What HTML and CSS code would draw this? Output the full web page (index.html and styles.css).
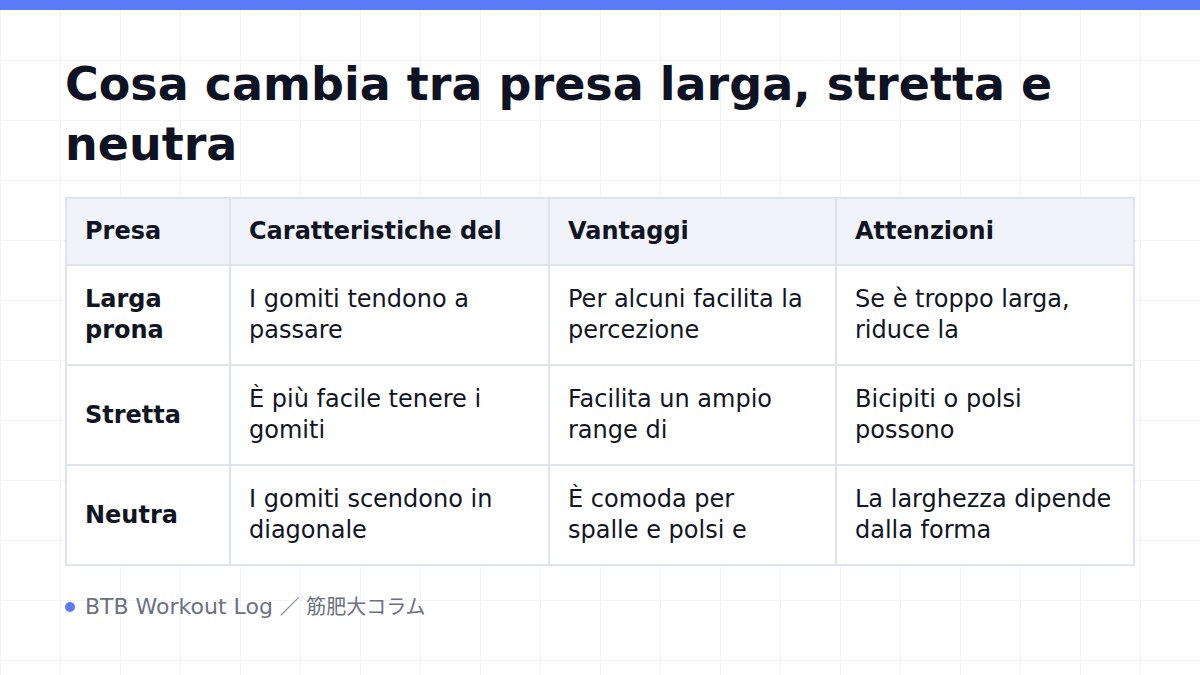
FILE: index.html
```html
<!DOCTYPE html>
<html lang="it">
<head>
<meta charset="utf-8">
<link rel="stylesheet" href="styles.css">
</head>
<body>
<div class="topbar"></div>
<main class="slide">
  <h1 class="title">Cosa cambia tra presa larga, stretta e neutra</h1>
  <table class="grip">
    <colgroup>
      <col class="c1"><col class="c2"><col class="c3"><col class="c4">
    </colgroup>
    <thead>
      <tr><th>Presa</th><th>Caratteristiche del</th><th class="k3">Vantaggi</th><th class="k4">Attenzioni</th></tr>
    </thead>
    <tbody>
      <tr><th>Larga prona</th><td>I gomiti tendono a passare</td><td class="k3">Per alcuni facilita la percezione</td><td class="k4">Se è troppo larga, riduce la</td></tr>
      <tr><th>Stretta</th><td>È più facile tenere i gomiti</td><td class="k3">Facilita un ampio range di</td><td class="k4">Bicipiti o polsi possono</td></tr>
      <tr><th>Neutra</th><td>I gomiti scendono in diagonale</td><td class="k3">È comoda per spalle e polsi e</td><td class="k4">La larghezza dipende dalla forma</td></tr>
    </tbody>
  </table>
  <footer class="foot"><span class="dot"></span><span class="foot-text">BTB Workout Log <span class="foot-jp">／ 筋肥大コラム</span></span></footer>
</main>
</body>
</html>
```
FILE: styles.css
```css
html, body {
  margin: 0;
  padding: 0;
}
body {
  width: 1200px;
  height: 675px;
  overflow: hidden;
  background-color: #ffffff;
  background-image:
    linear-gradient(to right, #f1f3f7 1px, transparent 1px),
    linear-gradient(to bottom, #f1f3f7 1px, transparent 1px);
  background-size: 60px 60px;
  background-position: 0 0;
  font-family: "DejaVu Sans", "Noto Sans CJK JP", sans-serif;
  color: #111523;
}
.topbar {
  height: 10px;
  background: #5b7cf6;
}
.slide {
  padding: 0 65px;
}
.title {
  margin: 44px 0 0 0;
  font-family: "DejaVu Sans", "Noto Sans CJK JP", sans-serif;
  font-weight: 700;
  font-size: 46px;
  line-height: 60px;
  color: #0f1222;
  width: 1070px;
}
.grip {
  margin-top: 23px;
  width: 1068px;
  border-collapse: collapse;
  table-layout: fixed;
  background: #ffffff;
  border: 2px solid #dfe3f0;
}
.c1 { width: 164px; }
.c2 { width: 319px; }
.c3 { width: 287px; }
.c4 { width: 298px; }
.grip th, .grip td {
  border: 2px solid #dfe3f0;
  padding: 18px 18px 18px 18px;
  font-size: 24px;
  line-height: 31px;
  text-align: left;
  vertical-align: middle;
  color: #111523;
  font-weight: 400;
}
.grip .k3 { padding-right: 28px; }
.grip .k4 { padding-right: 12px; }
.grip thead th {
  background: #f1f3fb;
  font-weight: 700;
  height: 31px;
  padding-top: 17px;
  padding-bottom: 17px;
}
.grip tbody th {
  font-weight: 700;
}
.grip tbody tr {
  height: 100px;
}
.foot {
  display: flex;
  align-items: center;
  gap: 10px;
  margin-top: 27px;
}
.dot {
  width: 10px;
  height: 10px;
  border-radius: 50%;
  background: #5b7cf6;
  flex: none;
}
.foot-text {
  font-size: 22px;
  line-height: 28px;
  color: #6b7181;
}
.foot-jp {
  font-size: 20px;
}
```
